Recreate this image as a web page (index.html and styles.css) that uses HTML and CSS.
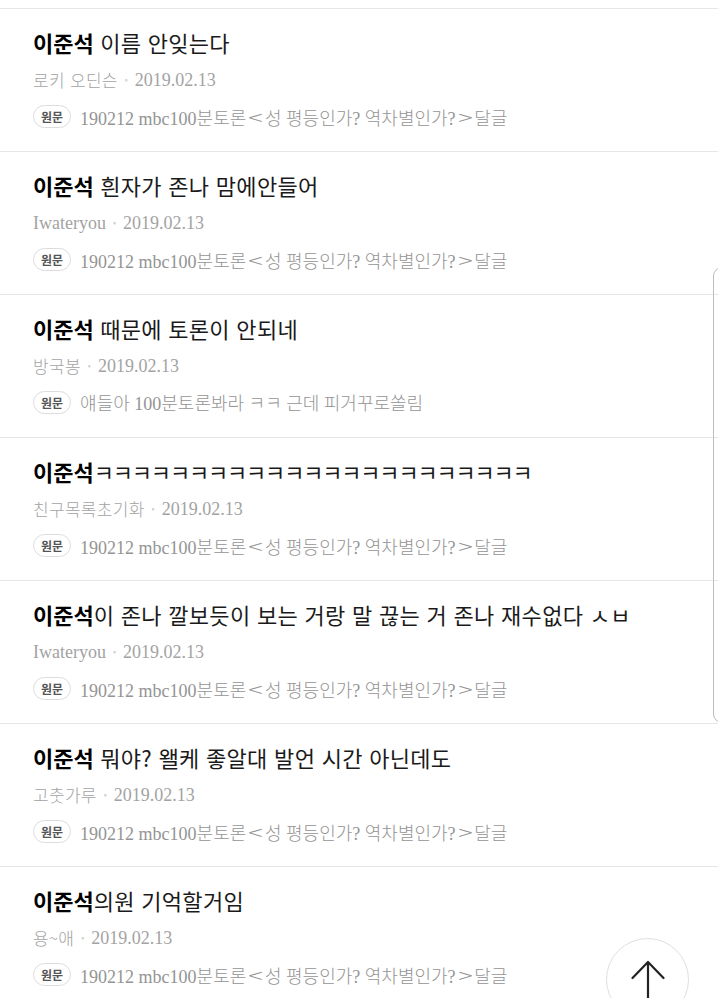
FILE: index.html
```html
<!DOCTYPE html>
<html lang="ko">
<head>
<meta charset="utf-8">
<link rel="stylesheet" href="styles.css">
</head>
<body>
<div class="top-spacer"></div>
<ul class="list">
  <li class="item">
    <div class="title"><b>이준석</b> 이름 안잊는다</div>
    <div class="meta"><span class="ko">로키 오딘슨</span><span class="dot">•</span><span class="date">2019.02.13</span></div>
    <div class="src"><span class="badge">원문</span><span class="src-text">190212 mbc100분토론<span class="br">&lt;</span>성 평등인가? 역차별인가?<span class="br">&gt;</span>달글</span></div>
  </li>
  <li class="item">
    <div class="title"><b>이준석</b> 흰자가 존나 맘에안들어</div>
    <div class="meta"><span class="date">Iwateryou</span><span class="dot">•</span><span class="date">2019.02.13</span></div>
    <div class="src"><span class="badge">원문</span><span class="src-text">190212 mbc100분토론<span class="br">&lt;</span>성 평등인가? 역차별인가?<span class="br">&gt;</span>달글</span></div>
  </li>
  <li class="item">
    <div class="title"><b>이준석</b> 때문에 토론이 안되네</div>
    <div class="meta"><span class="ko">방국봉</span><span class="dot">•</span><span class="date">2019.02.13</span></div>
    <div class="src"><span class="badge">원문</span><span class="src-text">얘들아 100분토론봐라 ㅋㅋ 근데 피거꾸로쏠림</span></div>
  </li>
  <li class="item">
    <div class="title"><b>이준석</b><span class="jamo">ㅋㅋㅋㅋㅋㅋㅋㅋㅋㅋㅋㅋㅋㅋㅋㅋㅋㅋㅋㅋㅋㅋㅋ</span></div>
    <div class="meta"><span class="ko">친구목록초기화</span><span class="dot">•</span><span class="date">2019.02.13</span></div>
    <div class="src"><span class="badge">원문</span><span class="src-text">190212 mbc100분토론<span class="br">&lt;</span>성 평등인가? 역차별인가?<span class="br">&gt;</span>달글</span></div>
  </li>
  <li class="item">
    <div class="title"><b>이준석</b>이 존나 깔보듯이 보는 거랑 말 끊는 거 존나 재수없다 ㅅㅂ</div>
    <div class="meta"><span class="date">Iwateryou</span><span class="dot">•</span><span class="date">2019.02.13</span></div>
    <div class="src"><span class="badge">원문</span><span class="src-text">190212 mbc100분토론<span class="br">&lt;</span>성 평등인가? 역차별인가?<span class="br">&gt;</span>달글</span></div>
  </li>
  <li class="item">
    <div class="title"><b>이준석</b> 뭐야? 왤케 좋알대 발언 시간 아닌데도</div>
    <div class="meta"><span class="ko">고춧가루</span><span class="dot">•</span><span class="date">2019.02.13</span></div>
    <div class="src"><span class="badge">원문</span><span class="src-text">190212 mbc100분토론<span class="br">&lt;</span>성 평등인가? 역차별인가?<span class="br">&gt;</span>달글</span></div>
  </li>
  <li class="item">
    <div class="title"><b>이준석</b>의원 기억할거임</div>
    <div class="meta"><span class="ko">용~애</span><span class="dot">•</span><span class="date">2019.02.13</span></div>
    <div class="src"><span class="badge">원문</span><span class="src-text">190212 mbc100분토론<span class="br">&lt;</span>성 평등인가? 역차별인가?<span class="br">&gt;</span>달글</span></div>
  </li>
</ul>
<div class="scrollbar"></div>
<button class="to-top" aria-label="맨 위로">
  <svg width="40" height="60" viewBox="0 0 40 60">
    <path d="M4.5 25 L20 9 L35.5 25 M20 9 L20 60" fill="none" stroke="#222" stroke-width="2.2" stroke-linecap="round" stroke-linejoin="round"/>
  </svg>
</button>
</body>
</html>
```
FILE: styles.css
```css
html, body {
  margin: 0;
  padding: 0;
  background: #fff;
  overflow: hidden;
  height: 998px;
}
body {
  font-family: "Noto Sans CJK KR", "Noto Sans", sans-serif;
  color: #111;
}
.top-spacer {
  height: 8px;
}
.list {
  list-style: none;
  margin: 0;
  padding: 0;
}
.item {
  border-top: 1px solid #e6e6e6;
  padding: 19px 33px 0;
  box-sizing: border-box;
  height: 143px;
}
.title {
  font-size: 22px;
  line-height: 28px;
  height: 28px;
  white-space: nowrap;
  color: #1a1a1a;
  letter-spacing: 0.3px;
}
.title b {
  font-weight: 700;
  color: #000;
  letter-spacing: 0;
}
.title .jamo {
  letter-spacing: -1.2px;
}
.meta {
  margin-top: 10px;
  height: 28px;
  line-height: 28px;
  display: flex;
  align-items: center;
  color: #a3a3a3;
  font-size: 17px;
  white-space: nowrap;
}
.meta .ko {
  font-family: "Noto Sans CJK KR", sans-serif;
  font-weight: 300;
  font-size: 17px;
  letter-spacing: 0.3px;
}
.meta .date {
  font-family: "Liberation Serif", serif;
  font-size: 18px;
}
.meta .dot {
  font-size: 9px;
  color: #cfcfcf;
  margin: 0 7px;
}
.src {
  margin-top: 8px;
  height: 28px;
  display: flex;
  align-items: center;
  white-space: nowrap;
}
.badge {
  display: inline-flex;
  align-items: center;
  justify-content: center;
  box-sizing: border-box;
  height: 23px;
  padding: 0 7px;
  border: 1px solid #dcdcdc;
  border-radius: 12px;
  font-size: 12px;
  font-weight: 700;
  color: #555;
  margin-right: 9px;
}
.src-text {
  font-family: "Liberation Serif", "Noto Sans CJK KR", serif;
  font-size: 18px;
  font-weight: 300;
  color: #949494;
}
.src-text .br {
  display: inline-block;
  font-family: "Noto Sans CJK KR", sans-serif;
  font-weight: 300;
  font-size: 20px;
  transform: scaleX(1.35);
  margin: 0 4px;
}
.scrollbar {
  position: fixed;
  left: 713px;
  top: 267px;
  width: 20px;
  height: 456px;
  border: 1px solid #bdbdbd;
  border-radius: 9px;
  box-sizing: border-box;
}
.to-top {
  position: fixed;
  left: 606px;
  top: 938px;
  width: 83px;
  height: 83px;
  border-radius: 50%;
  border: 1.5px solid #dedede;
  background: #fff;
  display: flex;
  justify-content: center;
  align-items: flex-start;
  padding: 14px 0 0;
  box-sizing: border-box;
}
```
